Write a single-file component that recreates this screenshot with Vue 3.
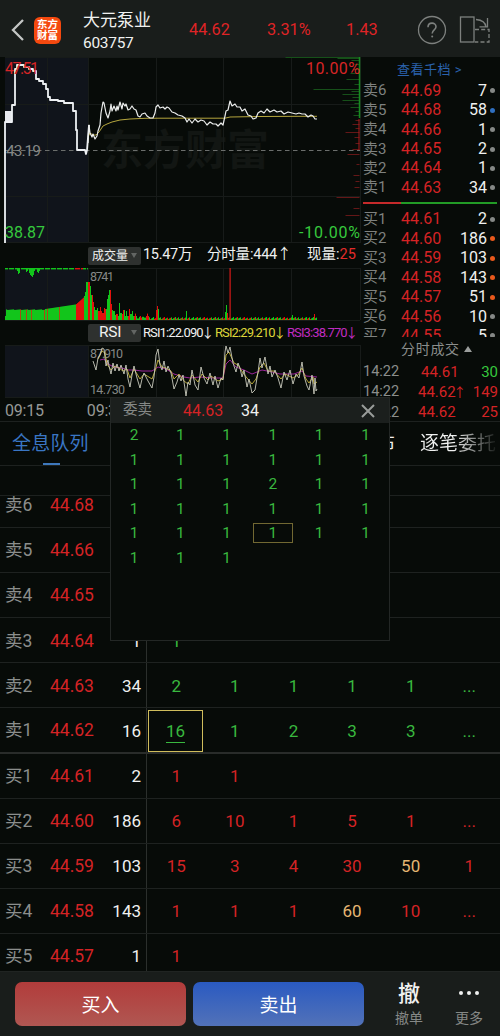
<template>
    <div class="page">
        <!--顶部标题栏-->
        <header class="header">
            <svg class="back" width="16" height="24" viewBox="0 0 16 24">
                <path d="M13 2 L3 12 L13 22" fill="none" stroke="#c4c6c5" stroke-width="2.3" />
            </svg>
            <div class="logo"><span>东方</span><span>财富</span></div>
            <div class="stock">
                <div class="name">大元泵业</div>
                <div class="code">603757</div>
            </div>
            <div class="quote q1">44.62</div>
            <div class="quote q2">3.31%</div>
            <div class="quote q3">1.43</div>
            <svg class="help" width="30" height="30" viewBox="0 0 30 30" fill="none" stroke="#7d807e">
                <circle cx="15" cy="15" r="13.5" stroke-width="1.3" />
                <path d="M11 12.2 C11 6.8 19 6.8 19 11.8 C19 15 15.2 14.8 15.2 18.6" stroke-width="1.6" />
                <circle cx="15.2" cy="21.6" r="1" fill="#7d807e" stroke="none" />
            </svg>
            <svg class="rotate" width="32" height="30" viewBox="0 0 32 30" fill="none" stroke="#7d807e" stroke-width="1.3">
                <rect x="1.5" y="2" width="13.5" height="25" />
                <path d="M17 4.5 C23 5 26.5 7.5 27 12 M20.5 11.8 H28.5 V3" />
                <path d="M16 14.5 H30 V27 H16" stroke-dasharray="4 2.2" />
            </svg>
        </header>

        <!--行情区-->
        <section class="market">
            <div class="charts">
                <svg class="svg" width="361" height="187" viewBox="0 57 361 187">
                    <rect x="5" y="57" width="83" height="186" fill="#10141b" />
                    <text class="mark" x="101" y="165" textLength="168">东方财富</text>
                    <path class="grid" d="M5 57.5H360M5 104.5H360M5 196.5H360M5 242.5H360M47.5 57V243M88.5 57V243M156.5 57V243M223.5 57V243M291.5 57V243M360.5 57V243" />
                    <path d="M5 150.5H360" stroke="#6b6e6c" stroke-dasharray="4.5 3.5" />
                    <path v-for="(b, i) in chips" :key="i" :d="`M359.5 ${b[0]}h-${b[1]}`" :stroke="b[0] < 119 ? '#165019' : '#641717'" />
                    <path d="M359.5 57V118" stroke="#178b20" stroke-width="1.5" />
                    <path d="M359 119V150" stroke="#a91c1c" />
                    <polyline class="avg" :points="avgLine" />
                    <rect x="5" y="111" width="7" height="12" fill="#e6e8ec" />
                    <polyline class="pre" :points="preLine" />
                    <polyline class="price" :points="priceLine" />
                    <text class="red t16" x="5" y="74" textLength="34">47.51</text>
                    <text class="red t16" x="306" y="74" textLength="54">10.00%</text>
                    <text class="grey t15" x="6" y="156" textLength="35">43.19</text>
                    <text class="green t16" x="5" y="238" textLength="40">38.87</text>
                    <text class="green t16" x="299" y="238" textLength="61">-10.00%</text>
                </svg>
                <div class="bar">
                    <div class="select"><span>成交量</span><i></i></div>
                    <span class="vol">15.47万</span>
                    <span class="minute">分时量:444↑</span>
                    <span>现量:<b>25</b></span>
                </div>
                <svg class="svg" width="361" height="54" viewBox="0 267 361 54">
                    <rect x="5" y="268" width="83" height="52" fill="#10141b" />
                    <path class="grid" d="M5 268.5H360M5 320.5H360M47.5 268V320M88.5 268V320M156.5 268V320M223.5 268V320M291.5 268V320M360.5 268V320" />
                    <rect v-for="(v, i) in volumes" :key="i" :x="v.x" :y="v.y" :width="v.w" :height="v.h" :fill="v.c" />
                    <text class="grey t12" x="90" y="281" textLength="24">8741</text>
                </svg>
                <div class="bar rsi">
                    <div class="select"><span>RSI</span><i></i></div>
                    <span class="r1">RSI1:22.090<em>↓</em></span>
                    <span class="r2">RSI2:29.210<em>↓</em></span>
                    <span class="r3">RSI3:38.770<em>↓</em></span>
                </div>
                <svg class="svg" width="361" height="54" viewBox="0 344 361 54">
                    <rect x="5" y="345" width="83" height="52" fill="#10141b" />
                    <path class="grid" d="M5 345.5H360M5 397.5H360M47.5 345V397M88.5 345V397M156.5 345V397M223.5 345V397M291.5 345V397M360.5 345V397" />
                    <text class="grey t12" x="90" y="358" textLength="33">87.910</text>
                    <text class="grey t12" x="90" y="394" textLength="35">14.730</text>
                    <polyline class="line3" :points="rsi3" />
                    <polyline class="line2" :points="rsi2" />
                    <polyline class="line1" :points="rsi1" />
                </svg>
                <div class="axis"><span>09:15</span><span>09:30</span></div>
            </div>

            <!--五档盘口-->
            <aside class="depth">
                <div class="more">查看千档 &gt;</div>
                <div class="levels">
                    <div v-for="d in asks" :key="d[0]" class="level">
                        <span class="lb">{{ d[0] }}</span>
                        <span class="pr">{{ d[1] }}</span>
                        <span class="qt">{{ d[2] }}</span>
                        <i :class="d[3]"></i>
                    </div>
                    <div class="ratio"><i></i></div>
                    <div v-for="d in bids" :key="d[0]" class="level">
                        <span class="lb">{{ d[0] }}</span>
                        <span class="pr">{{ d[1] }}</span>
                        <span class="qt">{{ d[2] }}</span>
                        <i :class="d[3]"></i>
                    </div>
                </div>
                <div class="deal-title">分时成交<i></i></div>
                <div v-for="(t, i) in deals" :key="i" class="deal">
                    <span class="time">14:22</span>
                    <span class="dp">{{ t[0] }}<em v-if="t[2]">↑</em></span>
                    <span class="dq" :class="{ down: i === 0 }">{{ t[1] }}</span>
                </div>
            </aside>
        </section>

        <!--标签页-->
        <nav class="tabs">
            <div class="tab active">全息队列</div>
            <div class="tab cut">分价分布</div>
            <div class="tab fade">逐笔委托</div>
        </nav>

        <!--买卖队列-->
        <section class="queue">
            <div class="blank"></div>
            <div class="rows">
                <div v-for="(r, i) in queue" :key="r.label" class="row" :class="{ sell: i < 6, mid: i === 5 }">
                    <span class="rl">{{ r.label }}</span>
                    <span class="rp">{{ r.price }}</span>
                    <span class="rq">{{ r.qty }}</span>
                    <div class="cells">
                        <span
                            v-for="(c, k) in r.list"
                            :key="k"
                            :class="{ picked: i === 5 && k === 0, big: c === '50' || c === '60' }"
                            ><u>{{ c }}</u></span
                        >
                    </div>
                </div>
            </div>
        </section>

        <!--底部操作栏-->
        <footer class="footer">
            <button class="buy">买入</button>
            <button class="sellout">卖出</button>
            <div class="act"><strong>撤</strong><span>撤单</span></div>
            <div class="act last">
                <strong><i></i><i></i><i></i></strong><span>更多</span>
            </div>
        </footer>

        <!--委托明细弹窗-->
        <div class="popup">
            <div class="pop-head">
                <span class="pt">委卖</span>
                <span class="pp">44.63</span>
                <span class="pn">34</span>
                <svg width="16" height="16" viewBox="0 0 16 16">
                    <path d="M2 2 L14 14 M14 2 L2 14" stroke="#999c9a" stroke-width="2" />
                </svg>
            </div>
            <div class="pop-grid">
                <span v-for="(n, i) in orders" :key="i" :class="{ on: i === 27 }">{{ n }}</span>
            </div>
        </div>
    </div>
</template>
<script setup>
import { ref } from "vue";

const asks = ref([
    ["卖6", "44.69", 7, ""],
    ["卖5", "44.68", 58, "blue"],
    ["卖4", "44.66", 1, ""],
    ["卖3", "44.65", 2, ""],
    ["卖2", "44.64", 1, ""],
    ["卖1", "44.63", 34, ""],
]);
const bids = ref([
    ["买1", "44.61", 2, ""],
    ["买2", "44.60", 186, "orange"],
    ["买3", "44.59", 103, "orange"],
    ["买4", "44.58", 143, "orange"],
    ["买5", "44.57", 51, "orange"],
    ["买6", "44.56", 10, ""],
    ["买7", "44.55", 5, ""],
]);
const deals = ref([
    ["44.61", 30, false],
    ["44.62", 149, true],
    ["44.62", 25, false],
]);
function line(label, price, qty, list) {
    return { label, price, qty, list: list ? list.split(" ") : [] };
}
const queue = ref([
    line("卖6", "44.68", "", ""),
    line("卖5", "44.66", "", ""),
    line("卖4", "44.65", "", ""),
    line("卖3", "44.64", "1", "1"),
    line("卖2", "44.63", "34", "2 1 1 1 1 ..."),
    line("卖1", "44.62", "16", "16 1 2 3 3 ..."),
    line("买1", "44.61", "2", "1 1"),
    line("买2", "44.60", "186", "6 10 1 5 1 ..."),
    line("买3", "44.59", "103", "15 3 4 30 50 1"),
    line("买4", "44.58", "143", "1 1 1 60 10 ..."),
    line("买5", "44.57", "1", "1"),
]);
// 共33笔委托, 第1笔和第16笔为2手
const orders = Array.from({ length: 33 }, (_, i) => (i === 0 || i === 15 ? 2 : 1));

// 右侧筹码分布 [y, 长度]
const chips = [
    [57.5, 74], [58.5, 22], [60.5, 8], [64.5, 5], [69.5, 6], [73.5, 9], [79.5, 13], [84.5, 5],
    [89.5, 46], [91.5, 8], [94.5, 17], [97.5, 7], [100.5, 17], [103.5, 5], [107.5, 9], [111.5, 4],
    [115.5, 6], [120.5, 4], [124.5, 7], [128.5, 4], [132.5, 14], [137.5, 5], [143.5, 4], [149.5, 7],
    [154.5, 12], [164.5, 3], [175.5, 6], [181.5, 4], [187.5, 5], [197.5, 23], [208.5, 6], [215.5, 14],
];

const preLine =
    "5,243 5,122 12,122 12,105 15,105 15,69 17,69 17,65 24,65 24,67 29,67 29,69 33,69 33,71 36,71 36,79 39,79 39,81 43,81 43,84 46,84 46,89 48,89 48,97 50,97 50,100 58,100 58,101 64,101 64,103 73,103 73,111 76,111 76,130 77,130 77,150 85,150 86,154 87,150 89,125";
const priceLine =
    "88,143 89,125 90,133 92,137 93,134 95,139 97,136 98,131 100,125 101,113 103,102 104,103 106,113 108,118 110,111 111,104 112,111 114,106 116,111 117,106 118,110 120,102 122,109 123,103 125,106 126,104 128,110 130,109 132,106 134,109 136,110 138,116 140,117 142,114 145,113 147,116 150,118 153,118 155,113 156,107 158,105 160,108 163,107 165,109 167,107 169,108 172,112 175,113 178,115 182,116 185,118 187,122 189,119 192,123 195,119 198,122 201,120 204,121 207,125 210,122 213,124 216,124 218,126 221,123 223,125 225,116 226,111 228,110 230,101 232,106 235,104 237,107 240,107 242,111 245,109 248,115 251,116 253,119 256,118 258,113 261,111 264,113 267,109 270,112 274,110 277,112 281,111 284,114 288,112 292,113 296,114 299,113 302,114 305,114 308,117 311,115 313,116 315,119 317,119";
const avgLine =
    "88,137 90,133 93,135 96,135 99,132 103,126 107,124 112,122 120,120 130,119 145,118.3 160,118.2 190,118.2 225,118.2 230,117 260,116.5 300,116.3 317,116.3";

const rsi1 =
    "93,361 96,370 98,358 100,355 102,348 104,349 106,366 108,360 109,366 111,374 113,363 115,371 117,364 119,371 121,365 124,374 126,365 128,379 130,387 132,375 134,366 137,378 140,388 142,379 144,373 148,381 152,388 154,377 156,355 158,349 160,365 162,370 164,361 166,372 168,366 171,373 174,389 177,382 179,375 181,381 183,375 186,396 188,382 190,385 192,370 195,385 198,390 201,367 204,378 207,384 210,373 213,385 215,376 218,388 221,378 223,380 225,352 226,346 228,353 230,347 233,363 236,372 238,363 240,368 242,377 244,370 247,387 249,379 252,393 255,390 258,372 260,358 262,368 265,357 268,374 270,366 272,377 275,370 278,378 281,388 284,372 287,380 290,370 293,384 296,374 299,378 302,362 304,376 307,386 309,390 312,375 314,394 315,378 316,391 317,389";
const rsi2 =
    "98,359 102,351 105,353 107,364 111,370 115,366 119,368 123,371 127,369 130,378 134,369 140,379 144,374 152,379 155,371 158,360 162,367 166,368 171,371 174,379 179,374 184,381 188,384 192,375 198,382 202,374 208,380 211,376 218,381 223,379 226,355 229,352 234,363 238,365 243,373 247,378 252,384 256,379 260,367 264,363 268,371 274,371 281,379 285,374 293,378 298,375 302,368 306,379 309,383 313,377 314,384 317,382";
const rsi3 =
    "100,360 104,359 108,364 114,367 122,368 128,370 134,370 142,371 152,371 158,367 166,369 174,374 184,377 190,378 200,377 212,378 223,378 226,364 230,360 236,367 244,370 252,374 262,370 272,372 280,374 294,374 302,371 306,376 317,377";

const RED = "#e3110d";
const GREEN = "#12c51b";
const volumes = [];
function addBar(x, h, c, w = 1.2) {
    volumes.push({ x, y: 320 - h, w, h, c });
}
// 集合竞价: 底部成交量
for (let x = 5; x < 88; x += 1) {
    let h = x < 45 ? 10 + (x % 7) * 0.1 : 11 + (x - 45) * 0.15;
    let c = [20, 26, 31, 44, 47, 59].includes(x) ? "#a94a12" : GREEN;
    if (x === 5) h = 4;
    if (x > 75) {
        h = 16 + (x - 76) * 0.9;
        c = RED;
    }
    if (x > 83) {
        h = [24, 28, 38, 38][x - 84];
        c = GREEN;
    }
    addBar(x, h, c);
}
// 集合竞价: 顶部未匹配量
for (let x = 5; x < 88; x += 1) {
    const tall = { 17: 3, 18: 6, 19: 5, 26: 4, 27: 3, 29: 5, 30: 7, 31: 8, 32: 9, 33: 7, 34: 3, 37: 4, 38: 5, 39: 3 };
    if (x % 6 === 2 && !tall[x]) continue;
    volumes.push({ x, y: 268, w: 1, h: tall[x] || 1.4, c: x > 74 && x < 83 ? RED : GREEN });
}
// 连续竞价
const heights = [
    38, 34, 25, 18, 13, 10, 12, 9, 13, 9, 7, 12, 11, 21, 25, 30, 16, 10, 9, 5, 6, 4, 17, 7, 6, 10, 4, 9, 4, 11, 6, 9, 4, 5,
    3, 5, 4, 3, 2, 4, 8, 5, 3, 2, 4,
];
for (let i = 0; i < 229; i++) {
    const x = 88 + i;
    let h = i < 46 ? heights[Math.floor(i * 0.72)] : heights[33 + ((i * 5) % 12)] * 0.8;
    if (i > 60) h = 1 + ((i * 7 + (i % 5) * 3) % 8) * 0.28;
    let c = (i * 13 + (i >> 2) * 7) % 5 < 2 ? RED : GREEN;
    if (i < 60) {
        c = (i > 10 && i < 17) || i < 2 || i % 6 > 3 ? RED : GREEN;
    }
    const peaks = { 68: 10, 69: 14, 70: 11, 98: 9, 137: 8, 138: 15, 139: 7, 204: 5, 226: 6 };
    if (peaks[i]) h = peaks[i];
    if (i > 66 && i < 70) c = RED;
    addBar(x, h, c, 1);
}
addBar(229.5, 52, "#d91b19", 1.2);
</script>
<style>
body {
    background: #070b08;
    overflow: hidden;
}
</style>
<style scoped>
.page {
    position: relative;
    width: 500px;
    height: 1036px;
    overflow: hidden;
    background: #070b08;
    color: #f0f1f0;
    font-family: Roboto, "Noto Sans CJK SC", sans-serif;
    font-size: 16px;
    line-height: 1;
    white-space: nowrap;
}
i,
em {
    font-style: normal;
}
/*标题栏*/
.header {
    display: flex;
    align-items: center;
    height: 57px;
    box-sizing: border-box;
    padding: 3px 0 0 10px;
    background: #191d1b;
}
.logo {
    width: 27px;
    height: 27px;
    margin-left: 8px;
    border-radius: 6px;
    background: #f5490f;
    display: flex;
    flex-direction: column;
    align-items: center;
    justify-content: center;
    font-size: 10.5px;
    font-weight: 700;
    line-height: 11.5px;
    color: #fff;
}
.stock {
    width: 106px;
    margin-left: 22px;
    padding-top: 2px;
}
.name {
    font-size: 17px;
    line-height: 24px;
}
.code {
    line-height: 23px;
    font-size: 15.5px;
    letter-spacing: -0.3px;
}
.quote {
    padding-top: 1px;
    color: #df2426;
    font-size: 16.3px;
}
.q1 {
    width: 78px;
}
.q2 {
    width: 79px;
}
.q3 {
    width: 71px;
}
.rotate {
    margin-left: 12px;
}
/*行情*/
.market {
    display: flex;
    height: 365px;
    box-sizing: border-box;
    border-bottom: 1px solid #1d211f;
}
.charts {
    width: 361px;
}
.svg {
    display: block;
}
.grid {
    fill: none;
    stroke: #171b19;
}
.mark {
    font-size: 42px;
    font-weight: 700;
    fill: #121613;
}
polyline {
    fill: none;
    stroke-linejoin: round;
}
.pre {
    stroke: #edf0f3;
    stroke-width: 1.8;
}
.price {
    stroke: #eceeed;
    stroke-width: 1.2;
}
.avg {
    stroke: #b5a63e;
}
.line1 {
    stroke: #c9cbbd;
    stroke-width: 0.9;
}
.line2 {
    stroke: #c7b53c;
    stroke-width: 0.9;
}
.line3 {
    stroke: #9b2597;
}
.t16 {
    font-size: 16px;
}
.t15 {
    font-size: 15.5px;
}
.t12 {
    font-size: 12.5px;
}
.red {
    fill: #d72526;
}
.green {
    fill: #36c83d;
}
.grey {
    fill: #858886;
}
.bar {
    display: flex;
    align-items: center;
    height: 23px;
    padding-left: 88px;
    font-size: 14.5px;
}
.select {
    width: 53px;
    height: 18px;
    flex: none;
    border-radius: 2px;
    background: #2e312f;
    display: flex;
    align-items: center;
    justify-content: space-between;
    box-sizing: border-box;
    padding: 0 4px;
    font-size: 12px;
}
.select i {
    border: 3px solid transparent;
    border-top: 5px solid #636664;
    border-bottom: 0;
}
.vol {
    width: 64px;
    flex: none;
    margin-left: 2px;
    letter-spacing: -0.3px;
}
.minute {
    width: 100px;
    flex: none;
    letter-spacing: -0.2px;
}
.bar b {
    font-weight: 400;
    color: #e32b2a;
}
.rsi {
    font-size: 13px;
    letter-spacing: -0.9px;
}
.rsi span {
    flex: none;
}
.rsi em {
    display: inline-flex;
    width: 10px;
    justify-content: center;
    letter-spacing: 0;
}
.rsi .select {
    padding-left: 11px;
    font-size: 15.5px;
    letter-spacing: -0.3px;
}
.r1 {
    margin-left: 2px;
    width: 72px;
}
.r2 {
    width: 72px;
    color: #ded63a;
}
.r3 {
    color: #c02bc0;
}
.axis {
    display: flex;
    gap: 43px;
    padding: 5px 0 0 5px;
    font-size: 16px;
    letter-spacing: -0.2px;
    color: #969997;
}
/*盘口*/
.depth {
    width: 139px;
    position: relative;
}
.more {
    height: 24px;
    box-sizing: border-box;
    padding: 6px 0 0 36px;
    font-size: 13px;
    letter-spacing: 0.5px;
    color: #2a62ac;
}
.levels {
    height: 256px;
    overflow: hidden;
}
.level {
    height: 19.45px;
    display: flex;
    align-items: center;
    padding-left: 2px;
}
.lb {
    width: 38px;
    font-size: 15px;
    color: #7e817f;
}
.pr {
    width: 39px;
    text-align: right;
    font-size: 16px;
    color: #d42325;
}
.qt {
    width: 47px;
    text-align: right;
    font-size: 16px;
}
.level i {
    width: 5px;
    height: 5px;
    margin-left: 3px;
    border-radius: 50%;
    background: #858886;
}
.level i.blue {
    background: #2f6fc0;
}
.level i.orange {
    background: #e9591c;
}
.ratio {
    height: 2px;
    margin: 4px 3px 6px 2px;
    background: #229b26;
}
.ratio i {
    display: block;
    width: 28%;
    height: 2px;
    background: #c52a2b;
}
.deal-title {
    height: 24px;
    display: flex;
    align-items: center;
    padding-left: 40px;
    font-size: 14px;
    letter-spacing: 0.7px;
    color: #8b8e8c;
}
.deal-title i {
    margin-left: 4px;
    border: 4px solid transparent;
    border-bottom: 6px solid #9b9e9c;
    border-top: 0;
}
.deal {
    height: 20.4px;
    box-sizing: border-box;
    display: flex;
    align-items: center;
    padding: 2px 0 0 2px;
    font-size: 15px;
    color: #d42325;
}
.time {
    width: 55px;
    font-size: 14.5px;
    color: #8b8e8c;
}
.dp {
    width: 47px;
}
.deal:nth-last-child(3) .dp {
    padding-left: 3px;
    width: 44px;
}
.dp em {
    display: inline-flex;
    width: 8px;
    justify-content: center;
    font-size: 13px;
}
.dq {
    width: 33px;
    text-align: right;
}
.down {
    color: #36c83d;
}
/*标签*/
.tabs {
    height: 44px;
    display: flex;
    box-sizing: border-box;
    border-bottom: 1px solid #1d211f;
    padding-left: 12px;
    font-size: 19px;
    line-height: 44px;
}
.active {
    width: 77px;
    position: relative;
    color: #3a76c4;
    letter-spacing: 0.2px;
}
.active::after {
    content: "";
    position: absolute;
    left: 31px;
    bottom: 0;
    width: 17px;
    height: 2px;
    background: #3e78bb;
}
.cut {
    margin-left: 230px;
}
.fade {
    margin-left: 25px;
    background: linear-gradient(90deg, #f0f1f0 45%, #171b18);
    background-clip: text;
    color: transparent;
}
/*队列*/
.queue {
    height: 505px;
    overflow: hidden;
}
.blank {
    height: 29px;
    border-bottom: 1px solid #1d211f;
}
.rows {
    height: 476px;
    overflow: hidden;
    display: flow-root;
}
.row {
    height: 45.1px;
    box-sizing: border-box;
    border-bottom: 1px solid #1e2220;
    display: flex;
    align-items: center;
    padding-left: 5px;
    color: #d42325;
}
.row:first-child {
    margin-top: -13px;
}
.row.mid {
    border-bottom: 2px solid #292c2a;
}
.rl,
.rp,
.rq,
.cells span {
    padding-top: 2px;
}
.rl {
    width: 45px;
    font-size: 17.5px;
    color: #8b8e8c;
}
.rp {
    width: 43px;
    font-size: 17.5px;
    text-align: right;
}
.rq {
    width: 48px;
    font-size: 17px;
    text-align: right;
    color: #f0f1f0;
}
.cells {
    height: 100%;
    margin-left: 5px;
    border-left: 1px solid #2b2f2c;
    display: grid;
    grid-template-columns: repeat(6, 58.6px);
    align-items: center;
    font-size: 17px;
    text-align: center;
}
.row.sell .cells {
    color: #39b83f;
}
.cells u {
    text-decoration: none;
}
.cells .picked {
    width: 53px;
    height: 40px;
    margin: 1px 0 0 1px;
    padding: 0;
    border: 1px solid #d0bd5c;
    line-height: 41px;
}
.picked u {
    padding-bottom: 1px;
    border-bottom: 1px solid #39b83f;
}
.big {
    color: #e5b673;
}
/*底部*/
.footer {
    height: 65px;
    display: flex;
    align-items: center;
    padding: 0 0 0 15px;
    box-sizing: border-box;
    background: #191d1b;
    border-top: 1px solid #202422;
}
button {
    width: 171px;
    height: 44px;
    padding: 0 0 2px;
    border: none;
    border-radius: 7px;
    color: #fff;
    font-family: inherit;
    font-size: 19px;
}
.buy {
    margin-right: 7px;
    background: linear-gradient(#b23c3b, #b05752);
}
.sellout {
    background: linear-gradient(#2a5ac1, #5272b8);
}
.act {
    width: 60px;
    margin-left: 15px;
    display: flex;
    flex-direction: column;
    align-items: center;
    font-size: 14px;
    color: #858886;
}
.act.last {
    margin-left: 0;
}
.act strong {
    height: 28px;
    line-height: 22px;
    font-size: 22px;
    font-weight: 500;
    color: #f0f1f0;
    display: flex;
    gap: 4px;
}
.act strong i {
    width: 4px;
    height: 4px;
    margin-top: 8px;
    border-radius: 50%;
    background: #f0f1f0;
}
/*弹窗*/
.popup {
    position: absolute;
    left: 110px;
    top: 397px;
    width: 280px;
    height: 244px;
    box-sizing: border-box;
    border: 1px solid #232725;
    background: #070b08;
}
.pop-head {
    height: 25px;
    display: flex;
    align-items: center;
    padding-left: 12px;
    background: #1b1f1d;
}
.pt {
    width: 60px;
    font-size: 14.5px;
    color: #858886;
}
.pp {
    width: 58px;
    color: #d42325;
}
.pn {
    width: 119px;
}
.pop-grid {
    display: grid;
    grid-template-columns: repeat(6, 46.3px);
    grid-auto-rows: 24.6px;
    font-size: 15.5px;
    color: #39b83f;
}
.pop-grid span {
    width: 38px;
    height: 18px;
    margin: 2px 0 0 3px;
    border: 1px solid transparent;
    line-height: 19px;
    text-align: center;
}
.pop-grid .on {
    border-color: #716832;
}
</style>
